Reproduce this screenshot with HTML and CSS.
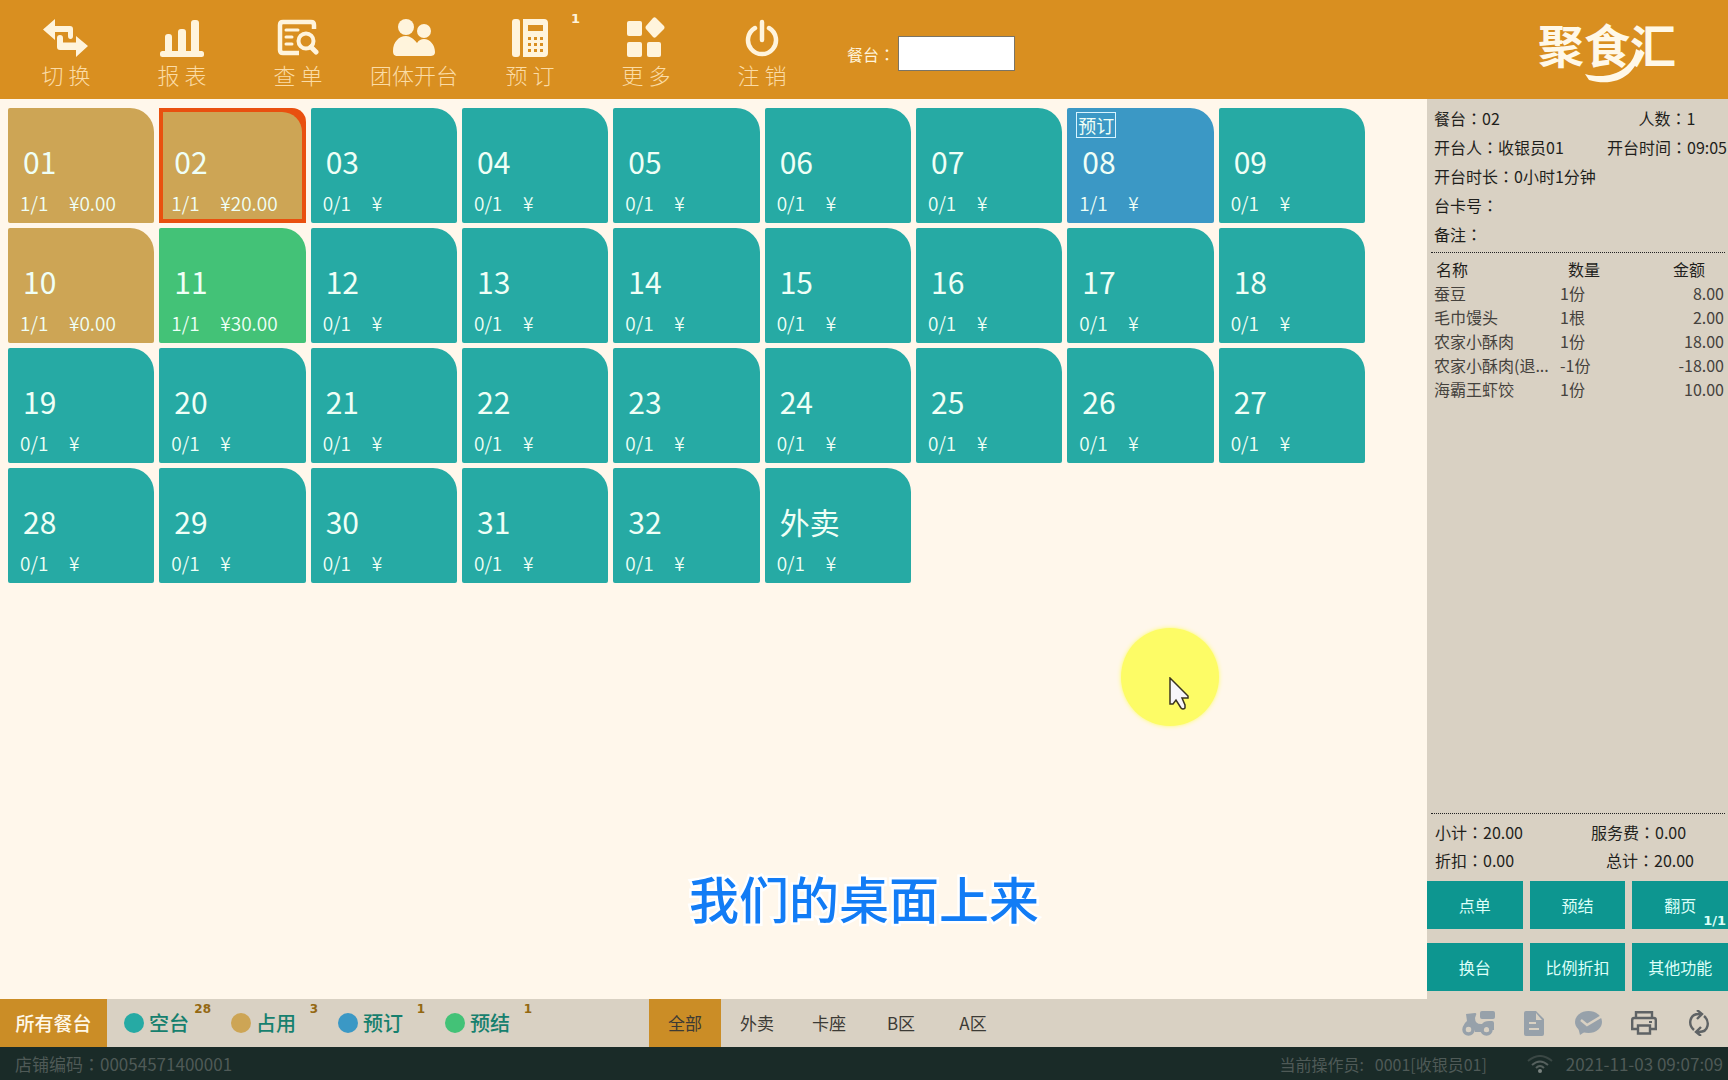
FILE: index.html
```html
<!DOCTYPE html>
<html lang="zh-CN">
<head>
<meta charset="utf-8">
<meta name="viewport" content="width=device-width, initial-scale=1">
<title>聚食汇</title>
<link rel="stylesheet" href="styles.css">
</head>
<body>
<header class="topbar">
  <nav class="tools">
    <button class="tool" type="button">
      <svg class="tool-icon" width="46" height="38" viewBox="0 0 46 38"><path d="M0 10.500 12 0v7h15q3 0 3 3v7q0 3-2.500 3T25 17v-4H12v8z"/><path d="M45 27 33 17v6.500H20V19q0-3-3-3t-3 3v9q0 3 3 3h16v7z"/></svg>
      <span>切 换</span>
    </button>
    <button class="tool" type="button">
      <svg class="tool-icon" width="44" height="38" viewBox="0 0 44 38"><rect x="0" y="32" width="44" height="6" rx="2.500"/><path d="M5 34V18q0-3 3-3h1q3 0 3 3v16zM18 34V13q0-3 3-3h2q3 0 3 3v21zM31 34V4q0-3 3-3h2q3 0 3 3v30z"/></svg>
      <span>报 表</span>
    </button>
    <button class="tool" type="button">
      <svg class="tool-icon" width="42" height="38" viewBox="0 0 42 38"><path fill="none" stroke="currentColor" stroke-width="4.500" d="M37 10V6q0-3-3-3H6Q3 3 3 6v25q0 3 3 3h16"/><path fill="none" stroke="currentColor" stroke-width="3" stroke-linecap="round" d="M9 11h12M9 18h6M9 25h6"/><circle cx="29" cy="22" r="7.500" fill="none" stroke="currentColor" stroke-width="4"/><path fill="none" stroke="currentColor" stroke-width="5" stroke-linecap="round" d="m34 28 5 5"/></svg>
      <span>查 单</span>
    </button>
    <button class="tool" type="button">
      <svg class="tool-icon" width="42" height="38" viewBox="0 0 42 38"><circle cx="13" cy="8" r="8"/><circle cx="31" cy="12" r="7"/><path d="M0 32C0 23 6 17 13 17c4 0 8 3 11 7 2-3 4-4 7-4 6 0 11 6 11 13 0 3-2 4-5 4H5c-4 0-5-2-5-5z"/></svg>
      <span>团体开台</span>
    </button>
    <button class="tool" type="button">
      <svg class="tool-icon" width="36" height="38" viewBox="0 0 36 38"><rect x="0" y="0" width="8" height="38" rx="3"/><path fill-rule="evenodd" d="M11 0h21q4 0 4 4v30q0 4-4 4H11zM16 6v6h15V6zM16 18v3h3v-3zM22 18v3h3v-3zM28 18v3h3v-3zM16 24v3h3v-3zM22 24v3h3v-3zM28 24v3h3v-3zM16 30v3h3v-3zM22 30v3h3v-3zM28 30v3h3v-3z"/></svg>
      <span>预 订</span>
      <b class="tool-count">1</b>
    </button>
    <button class="tool" type="button">
      <svg class="tool-icon" width="38" height="40" viewBox="0 0 38 40"><rect x="0" y="4" width="15" height="15" rx="2"/><rect x="0" y="25" width="15" height="15" rx="2"/><rect x="20" y="25" width="14" height="15" rx="2"/><path d="M26 1q1.500-1.500 3 0l8 8q1 1.500 0 3l-8 8q-1.500 1.500-3 0l-7-8q-1-1.500 0-3z"/></svg>
      <span>更 多</span>
    </button>
    <button class="tool" type="button">
      <svg class="tool-icon" width="34" height="38" viewBox="0 0 34 38"><path fill="none" stroke="currentColor" stroke-width="4.500" stroke-linecap="round" d="M10 9A14 14 0 1 0 24 9M17 3v18"/></svg>
      <span>注 销</span>
    </button>
  </nav>
  <div class="lookup">
    <label for="table-no">餐台<i class="colon" lang="zh-TW">：</i></label>
    <input id="table-no" type="text">
  </div>
  <div class="logo">聚食汇<svg class="logo-swoosh" width="56" height="34" viewBox="0 0 56 34"><path d="M51 0C48 20 26 32 0 25L4 31C30 39 52 26 55 2z"/></svg></div>
</header>

<div class="workspace">
  <main class="floor">
    <div class="tables">
      <button class="tile busy" type="button"><span class="no">01</span><span class="meta"><span>1/1</span><span>¥0.00</span></span></button>
      <button class="tile busy selected" type="button"><span class="no">02</span><span class="meta"><span>1/1</span><span>¥20.00</span></span></button>
      <button class="tile" type="button"><span class="no">03</span><span class="meta"><span>0/1</span><span>¥</span></span></button>
      <button class="tile" type="button"><span class="no">04</span><span class="meta"><span>0/1</span><span>¥</span></span></button>
      <button class="tile" type="button"><span class="no">05</span><span class="meta"><span>0/1</span><span>¥</span></span></button>
      <button class="tile" type="button"><span class="no">06</span><span class="meta"><span>0/1</span><span>¥</span></span></button>
      <button class="tile" type="button"><span class="no">07</span><span class="meta"><span>0/1</span><span>¥</span></span></button>
      <button class="tile booked" type="button"><span class="tag">预订</span><span class="no">08</span><span class="meta"><span>1/1</span><span>¥</span></span></button>
      <button class="tile" type="button"><span class="no">09</span><span class="meta"><span>0/1</span><span>¥</span></span></button>
      <button class="tile busy" type="button"><span class="no">10</span><span class="meta"><span>1/1</span><span>¥0.00</span></span></button>
      <button class="tile billed" type="button"><span class="no">11</span><span class="meta"><span>1/1</span><span>¥30.00</span></span></button>
      <button class="tile" type="button"><span class="no">12</span><span class="meta"><span>0/1</span><span>¥</span></span></button>
      <button class="tile" type="button"><span class="no">13</span><span class="meta"><span>0/1</span><span>¥</span></span></button>
      <button class="tile" type="button"><span class="no">14</span><span class="meta"><span>0/1</span><span>¥</span></span></button>
      <button class="tile" type="button"><span class="no">15</span><span class="meta"><span>0/1</span><span>¥</span></span></button>
      <button class="tile" type="button"><span class="no">16</span><span class="meta"><span>0/1</span><span>¥</span></span></button>
      <button class="tile" type="button"><span class="no">17</span><span class="meta"><span>0/1</span><span>¥</span></span></button>
      <button class="tile" type="button"><span class="no">18</span><span class="meta"><span>0/1</span><span>¥</span></span></button>
      <button class="tile" type="button"><span class="no">19</span><span class="meta"><span>0/1</span><span>¥</span></span></button>
      <button class="tile" type="button"><span class="no">20</span><span class="meta"><span>0/1</span><span>¥</span></span></button>
      <button class="tile" type="button"><span class="no">21</span><span class="meta"><span>0/1</span><span>¥</span></span></button>
      <button class="tile" type="button"><span class="no">22</span><span class="meta"><span>0/1</span><span>¥</span></span></button>
      <button class="tile" type="button"><span class="no">23</span><span class="meta"><span>0/1</span><span>¥</span></span></button>
      <button class="tile" type="button"><span class="no">24</span><span class="meta"><span>0/1</span><span>¥</span></span></button>
      <button class="tile" type="button"><span class="no">25</span><span class="meta"><span>0/1</span><span>¥</span></span></button>
      <button class="tile" type="button"><span class="no">26</span><span class="meta"><span>0/1</span><span>¥</span></span></button>
      <button class="tile" type="button"><span class="no">27</span><span class="meta"><span>0/1</span><span>¥</span></span></button>
      <button class="tile" type="button"><span class="no">28</span><span class="meta"><span>0/1</span><span>¥</span></span></button>
      <button class="tile" type="button"><span class="no">29</span><span class="meta"><span>0/1</span><span>¥</span></span></button>
      <button class="tile" type="button"><span class="no">30</span><span class="meta"><span>0/1</span><span>¥</span></span></button>
      <button class="tile" type="button"><span class="no">31</span><span class="meta"><span>0/1</span><span>¥</span></span></button>
      <button class="tile" type="button"><span class="no">32</span><span class="meta"><span>0/1</span><span>¥</span></span></button>
      <button class="tile" type="button"><span class="no">外卖</span><span class="meta"><span>0/1</span><span>¥</span></span></button>
    </div>
  </main>

  <aside class="order">
    <section class="info">
      <div class="pair"><span>餐台<i class="colon" lang="zh-TW">：</i>02</span><span class="second">人数<i class="colon" lang="zh-TW">：</i>1</span></div>
      <div class="pair"><span>开台人<i class="colon" lang="zh-TW">：</i>收银员01</span><span class="second">开台时间<i class="colon" lang="zh-TW">：</i>09:05</span></div>
      <div>开台时长<i class="colon" lang="zh-TW">：</i>0小时1分钟</div>
      <div>台卡号<i class="colon" lang="zh-TW">：</i></div>
      <div>备注<i class="colon" lang="zh-TW">：</i></div>
    </section>
    <section class="lines">
      <table class="dishes">
        <thead><tr><th class="name">名称</th><th class="qty">数量</th><th class="sum">金额</th></tr></thead>
        <tbody>
          <tr><td>蚕豆</td><td>1份</td><td class="sum">8.00</td></tr>
          <tr><td>毛巾馒头</td><td>1根</td><td class="sum">2.00</td></tr>
          <tr><td>农家小酥肉</td><td>1份</td><td class="sum">18.00</td></tr>
          <tr><td>农家小酥肉(退...</td><td>-1份</td><td class="sum">-18.00</td></tr>
          <tr><td>海霸王虾饺</td><td>1份</td><td class="sum">10.00</td></tr>
        </tbody>
      </table>
    </section>
    <section class="totals">
      <span>小计<i class="colon" lang="zh-TW">：</i>20.00</span><span>服务费<i class="colon" lang="zh-TW">：</i>0.00</span>
      <span>折扣<i class="colon" lang="zh-TW">：</i>0.00</span><span class="grand">总计<i class="colon" lang="zh-TW">：</i>20.00</span>
    </section>
    <section class="actions">
      <button type="button">点单</button>
      <button type="button">预结</button>
      <button type="button">翻页<b class="page-count">1/1</b></button>
      <button type="button">换台</button>
      <button type="button">比例折扣</button>
      <button type="button">其他功能</button>
    </section>
  </aside>
</div>

<div class="filters">
  <button class="all-tables" type="button">所有餐台</button>
  <ul class="legend">
    <li><span class="dot free"></span>空台<b>28</b></li>
    <li><span class="dot busy"></span>占用<b>3</b></li>
    <li><span class="dot booked"></span>预订<b>1</b></li>
    <li><span class="dot billed"></span>预结<b>1</b></li>
  </ul>
  <nav class="areas">
    <button class="area current" type="button">全部</button>
    <button class="area" type="button">外卖</button>
    <button class="area" type="button">卡座</button>
    <button class="area" type="button">B区</button>
    <button class="area" type="button">A区</button>
  </nav>
  <div class="shortcuts">
    <button type="button" aria-label="外送"><svg width="33" height="25" viewBox="0 0 33 25"><rect x="18" y="0" width="15" height="8" rx="2"/><path d="M4 3 13 2q2 0 1 2l-1 3q0 6 6 6h1q2-3 7-3h3q2 0 2 2v7h-5q-2-3-6 0l-2 2H13q-1-5-6-6-3 0-6 2 1-5 4-7z"/><circle cx="6.500" cy="18.500" r="4.500" fill="none" stroke="currentColor" stroke-width="3.500"/><circle cx="24.500" cy="18.500" r="4.500" fill="none" stroke="currentColor" stroke-width="3.500"/><circle cx="6.500" cy="18.500" r="2.500" class="hole"/><circle cx="24.500" cy="18.500" r="2.500" class="hole"/></svg></button>
    <button type="button" aria-label="单据"><svg width="20" height="25" viewBox="0 0 20 25"><path fill-rule="evenodd" d="M2 0h10l8 8v15q0 2-2 2H2q-2 0-2-2V2Q0 0 2 0zM12 2v7h6zM5 11v2h7v-2zM5 17v2h10v-2z"/></svg></button>
    <button type="button" aria-label="消息"><svg width="27" height="24" viewBox="0 0 27 24"><ellipse cx="13.500" cy="11" rx="13.500" ry="11"/><path d="M3 16 5 24l6-4z"/><path class="tick" d="m6 9 6 5L27 5"/></svg></button>
    <button class="active" type="button" aria-label="打印"><svg width="26" height="24" viewBox="0 0 26 24"><path fill="none" stroke="currentColor" stroke-width="2.400" d="M5 7V1.200h16V7M6 18H1.200V9q0-2 2-2h19.600q2 0 2 2v9H20M7 14.500h12v8H7z"/><path d="M18 10h3v2h-3z"/></svg></button>
    <button class="active" type="button" aria-label="刷新"><svg width="20" height="26" viewBox="0 0 20 26"><path fill="none" stroke="currentColor" stroke-width="2.400" d="M5 20C-1 15 0 4 10 4h3M8 0l5 4-5 5M15 6c6 5 5 16-5 16H7M12 17l-5 5 5 4"/></svg></button>
  </div>
</div>

<footer class="status">
  <span class="shop">店铺编码<i class="colon" lang="zh-TW">：</i>00054571400001</span>
  <span class="operator">当前操作员: &nbsp; 0001[收银员01]</span>
  <svg class="wifi" width="26" height="18" viewBox="0 0 26 18"><path fill="none" stroke="#3a4744" stroke-width="2" d="M1 6q12-10 24 0"/><path fill="none" stroke="#56615e" stroke-width="2" d="M5 10q8-7 16 0M9 13q4-4 8 0"/><circle cx="13" cy="16" r="2" fill="#7a8380"/></svg>
  <time datetime="2021-11-03T09:07:09">2021-11-03 09:07:09</time>
</footer>

<div class="caption">我们的桌面上来</div>
<div class="pointer"><svg width="20" height="33" viewBox="0 0 20 33"><path d="M1 1v26l3 0 3-4 5 8q2 2 4 0l0-3-3-7h6v-2z" fill="#f7f5fa" stroke="#3a3420" stroke-width="1.500"/></svg></div>
</body>
</html>
```
FILE: styles.css
```css
* {
  box-sizing: border-box;
}

body {
  position: relative;
  display: flex;
  flex-direction: column;
  min-height: 100vh;
  margin: 0;
  background: #fff7eb;
  color: #1f1f1c;
  font: 16px/24px "Noto Sans CJK SC", sans-serif;
  overflow-x: hidden;
}

button {
  margin: 0;
  padding: 0;
  border: 0;
  background: none;
  color: inherit;
  font: inherit;
  cursor: pointer;
}

svg {
  fill: currentColor;
}

/* The Traditional Chinese face centres the full-width colon in its cell */
.colon {
  font-family: "Noto Sans CJK TC", sans-serif;
  font-style: normal;
}

/* Top bar */
.topbar {
  display: flex;
  align-items: stretch;
  height: 99px;
  padding: 0 52px 0 8px;
  background: #d98f20;
  color: #fff4dc;
}

.tools {
  display: flex;
}

.tool {
  position: relative;
  display: flex;
  flex-direction: column;
  align-items: center;
  justify-content: flex-end;
  gap: 2px;
  width: 116px;
  padding-bottom: 10px;
  font-size: 22px;
  font-weight: 300;
  line-height: 30px;
}

.tool span {
  color: #fbdca6;
}

.tool-count {
  position: absolute;
  top: 11px;
  right: 8px;
  font: bold 13px/16px "DejaVu Sans", sans-serif;
}

.lookup {
  display: flex;
  align-items: center;
  gap: 3px;
  margin-left: 27px;
  padding-top: 8px;
}

.lookup input {
  width: 117px;
  height: 35px;
  border: 1px solid #7a7466;
  background: #fff;
  font: inherit;
}

.logo {
  position: relative;
  margin-left: auto;
  padding-top: 16px;
  color: #fff8e8;
  font-size: 46px;
  font-weight: 700;
  line-height: 54px;
}

.logo-swoosh {
  position: absolute;
  left: 47px;
  bottom: 16px;
}

/* Floor plan */
.workspace {
  display: flex;
  flex: 1;
}

.floor {
  flex: 1;
  min-width: 0;
  padding: 9px 62px 9px 8px;
}

.tables {
  display: grid;
  grid-template-columns: repeat(9, 1fr);
  gap: 5px;
}

.tile {
  position: relative;
  isolation: isolate;
  display: flex;
  flex-direction: column;
  gap: 12px;
  height: 115px;
  padding: 35px 0 8px 12px;
  border-radius: 2px 24px 2px 2px;
  background: #26aaa4;
  color: #effff6;
  text-align: left;
}

.no {
  padding-left: 3px;
  font-size: 30px;
  line-height: 36px;
}

.meta {
  display: grid;
  grid-template-columns: 49px 1fr;
  font-size: 19px;
  font-weight: 350;
  line-height: 24px;
}

.busy {
  background: #cda555;
}

.booked {
  background: #3b98c5;
}

.billed {
  background: #43c277;
}

.selected {
  border-radius: 0 14px 0 0;
  background: #e9500f;
}

.selected::before {
  content: "";
  position: absolute;
  inset: 4px;
  z-index: -1;
  border-radius: 0 20px 0 0;
  background: #cda555;
}

.tag {
  position: absolute;
  top: 4px;
  left: 9px;
  padding: 0 1px;
  border: 1px solid #d8f4ff;
  font-size: 18px;
  line-height: 24px;
}

/* Order panel */
.order {
  display: flex;
  flex-direction: column;
  width: 301px;
  padding-bottom: 8px;
  background: #d9d1c3;
  overflow: hidden;
}

.info {
  margin: 0 3px 0 4px;
  padding: 5px 0 3px 3px;
  border-bottom: 1px dotted #222;
  line-height: 29px;
  white-space: nowrap;
}

.pair {
  display: grid;
  grid-template-columns: 172px 122px;
}

.second {
  text-align: center;
}

.lines {
  flex: 1;
  margin: 0 3px 0 4px;
  padding: 4px 0 0 3px;
  border-bottom: 1px dotted #222;
}

.dishes {
  width: 100%;
  border-collapse: collapse;
  table-layout: fixed;
  color: #45423d;
  white-space: nowrap;
}

.dishes td,
.dishes th {
  padding: 0;
  font-weight: 400;
  text-align: left;
}

.dishes th {
  padding-left: 2px;
  color: #1f1f1c;
}

.dishes .name {
  width: 126px;
}

.dishes .qty {
  width: 90px;
  padding-left: 8px;
}

.dishes td.sum {
  padding-right: 1px;
  text-align: right;
}

.dishes th.sum {
  padding-right: 20px;
  text-align: right;
}

.totals {
  display: grid;
  grid-template-columns: 156px 1fr;
  padding: 4px 0 7px 8px;
  line-height: 28px;
}

.grand {
  padding-left: 15px;
}

.actions {
  display: grid;
  grid-template-columns: repeat(3, 1fr);
  gap: 14px 7px;
}

.actions button {
  position: relative;
  height: 48px;
  background: #0d9690;
  color: #dcfff8;
}

.page-count {
  position: absolute;
  right: 2px;
  bottom: 0;
  font: bold 13px/16px "DejaVu Sans", sans-serif;
}

/* Filter bar */
.filters {
  display: flex;
  height: 48px;
  background: #d9d1c3;
}

.all-tables {
  width: 107px;
  background: #cb8d26;
  color: #fff8e8;
  font-size: 19px;
  font-weight: 500;
}

.legend {
  display: flex;
  margin: 0;
  padding: 0;
  list-style: none;
  color: #16806e;
  font-size: 20px;
  font-weight: 500;
}

.legend li {
  position: relative;
  display: flex;
  align-items: center;
  gap: 5px;
  width: 107px;
  padding-left: 17px;
}

.legend b {
  position: absolute;
  top: 2px;
  right: 3px;
  color: #946812;
  font: bold 12px/16px "DejaVu Sans", sans-serif;
}

.dot {
  width: 20px;
  height: 20px;
  border-radius: 50%;
}

.free {
  background: #26aaa4;
}

.areas {
  display: flex;
  margin-left: 114px;
}

.area {
  width: 72px;
  color: #3c3a35;
  font-size: 17px;
}

.current {
  background: #cb8d26;
}

.shortcuts {
  display: flex;
  margin-left: auto;
  padding-right: 2px;
  color: #97a1aa;
}

.shortcuts button {
  display: flex;
  align-items: center;
  justify-content: center;
  width: 55px;
}

.shortcuts .active {
  color: #5f6365;
}

.hole {
  fill: #d9d1c3;
}

.tick {
  fill: none;
  stroke: #d9d1c3;
  stroke-width: 2.5;
}

/* Status bar */
.status {
  display: flex;
  align-items: center;
  height: 33px;
  padding: 0 5px 0 15px;
  background: #1a2b28;
  color: #4f5a57;
}

.shop,
.status time {
  font-size: 17px;
}

.operator {
  margin-left: auto;
}

.wifi {
  margin: 0 13px 0 40px;
}

/* Overlays */
.caption {
  position: absolute;
  bottom: 147px;
  left: 0;
  width: 100%;
  color: #127cf5;
  font-size: 50px;
  font-weight: 500;
  line-height: 72px;
  text-align: center;
  -webkit-text-stroke: 5px #fff;
  paint-order: stroke fill;
  pointer-events: none;
}

.pointer {
  position: absolute;
  top: 628px;
  left: 1121px;
  width: 98px;
  height: 98px;
  padding: 49px 0 0 48px;
  border-radius: 50%;
  background: #fdfc66;
  box-shadow: 0 0 4px #fdfc66;
  pointer-events: none;
}
```
